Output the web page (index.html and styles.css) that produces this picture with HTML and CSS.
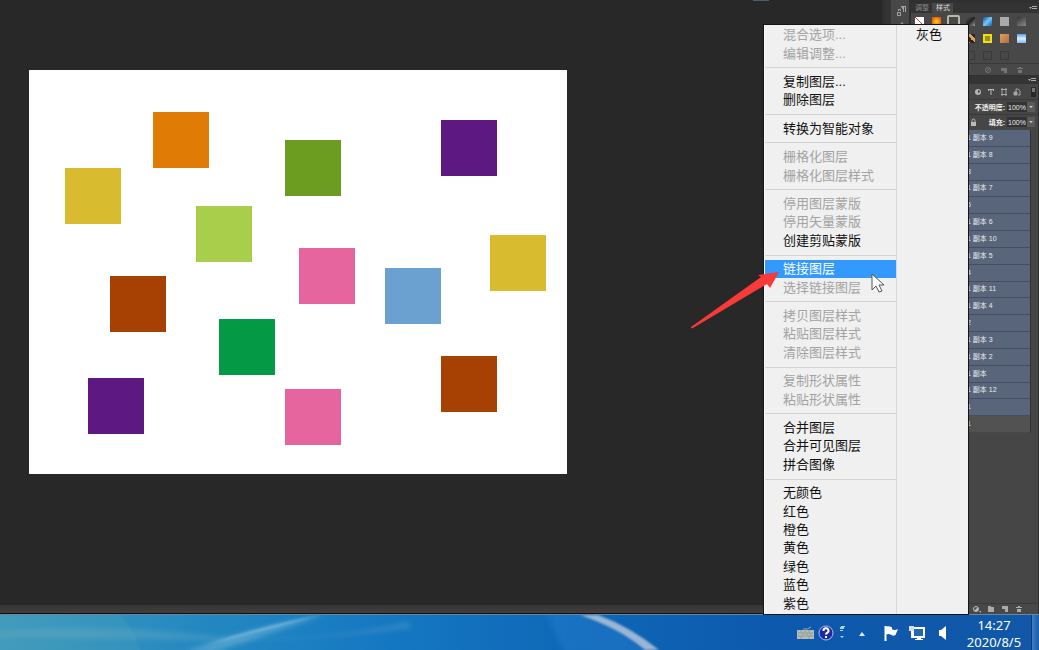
FILE: index.html
```html
<!DOCTYPE html>
<html lang="zh-CN">
<head>
<meta charset="utf-8">
<title>图层菜单</title>
<link rel="stylesheet" href="styles.css">
</head>
<body>
<main class="app">
  <section class="canvas-area">
    <svg class="document" viewBox="0 0 538 404" role="img" aria-label="画布">
      <rect width="538" height="404" fill="#fff"/>
      <rect x="124" y="42" width="56" height="56" fill="#e07b06"/>
      <rect x="256" y="70" width="56" height="56" fill="#6c9d20"/>
      <rect x="412" y="50" width="56" height="56" fill="#5d1881"/>
      <rect x="36" y="98" width="56" height="56" fill="#d8bb2e"/>
      <rect x="167" y="136" width="56" height="56" fill="#a8ce4b"/>
      <rect x="270" y="178" width="56" height="56" fill="#e7659f"/>
      <rect x="461" y="165" width="56" height="56" fill="#d8bb2e"/>
      <rect x="356" y="198" width="56" height="56" fill="#6ba1d1"/>
      <rect x="81" y="206" width="56" height="56" fill="#a64103"/>
      <rect x="190" y="249" width="56" height="56" fill="#049a45"/>
      <rect x="412" y="286" width="56" height="56" fill="#a64103"/>
      <rect x="59" y="308" width="56" height="56" fill="#5d1881"/>
      <rect x="256" y="319" width="56" height="56" fill="#e7659f"/>
    </svg>
    <div class="status-strip"></div>
    <div class="top-notch"></div>
  </section>

  <aside class="icon-strip">
    <svg width="12" height="14" viewBox="0 0 12 14" fill="none" stroke="#a5a5a5"><path d="M4 2.500h5M6.500 2v6M8.500 2v6"/><path d="M6 2a2 2 0 0 0 0 3z" fill="#a5a5a5"/><path d="M.5 8.500h3v3h-3zM1.500 7V5.500h2V7"/></svg>
    <svg width="12" height="10" viewBox="0 0 12 10"><path d="M2 4l3-4 3 4z" fill="#999"/></svg>
  </aside>

  <aside class="panels">
    <section class="styles-panel">
      <header class="tabs">
        <button class="tab">调整</button><button class="tab tab-on">样式</button>
        <svg class="menu-mark" width="8" height="6" viewBox="0 0 8 6"><path d="M0 2h3L1.500 4zM3 1h5v1H3zM3 3h5v1H3z" fill="#aaa"/></svg>
      </header>
      <div class="swatches">
        <i class="sw sw-none"></i><i class="sw sw-fire"></i><i class="sw sw-frame"></i><i class="sw sw-night"></i><i class="sw sw-blue"></i><i class="sw sw-gray"></i><i class="sw sw-steel"></i>
        <i class="sw"></i><i class="sw"></i><i class="sw"></i><i class="sw sw-camo"></i><i class="sw sw-yellow"></i><i class="sw sw-copper"></i><i class="sw sw-sky"></i>
        <i class="sw"></i><i class="sw"></i><i class="sw"></i><i class="sw sw-empty"></i><i class="sw sw-empty"></i><i class="sw sw-empty"></i>
      </div>
      <footer class="foot foot-dim">
        <svg width="8" height="8" viewBox="0 0 8 8" fill="none" stroke="#757575"><circle cx="4" cy="4" r="2.500"/><path d="M2 6l4-4"/></svg>
        <svg width="8" height="8" viewBox="0 0 8 8"><path d="M1 2h6v5H4V5H1z" fill="#757575"/></svg>
        <svg width="8" height="8" viewBox="0 0 8 8"><path d="M1 2h2V1h2v1h2v1H1zM2 4h4v3H2z" fill="#757575"/></svg>
      </footer>
    </section>

    <section class="layers-panel">
      <header class="layers-head">
        <svg class="menu-mark" width="8" height="6" viewBox="0 0 8 6"><path d="M0 2h3L1.500 4zM3 1h5v1H3zM3 3h5v1H3z" fill="#aaa"/></svg>
      </header>
      <div class="filters">
        <svg width="8" height="8" viewBox="0 0 8 8"><path d="M1 1h6v6H1z" fill="none" stroke="#bbb"/></svg>
        <svg width="8" height="8" viewBox="0 0 8 8"><circle cx="4" cy="4" r="3" fill="#b5b5b5"/><path d="M4 2a2 2 0 0 1 2 2l-2 1z" fill="#444"/></svg>
        <svg width="8" height="8" viewBox="0 0 8 8"><path d="M1 1h6v2H6V2H4.500v5h-1V2H2v1H1z" fill="#bbb"/></svg>
        <svg width="8" height="8" viewBox="0 0 8 8" fill="none" stroke="#a5a5a5"><path d="M2 0v8M6 0v8M1 1.500h6M1 6.500h6"/></svg>
        <svg width="8" height="8" viewBox="0 0 8 8" fill="none" stroke="#a5a5a5"><path d="M3 5V1h2l2 2v4H5"/><path d="M1 4h3v3H1z" fill="#a5a5a5"/></svg>
        <svg width="5" height="10" viewBox="0 0 5 10"><path d="M0 0h5v10H0z" fill="#292929"/><path d="M1 1h3v4H1z" fill="#777"/></svg>
      </div>
      <div class="setting"><label for="opacity">不透明度:</label><input id="opacity" value="100%"><button class="drop" aria-label="不透明度选项"></button></div>
      <div class="setting">
        <svg class="lock" width="7" height="8" viewBox="0 0 7 8"><path d="M2 4V2.500a1.500 1.500 0 0 1 3 0V4" fill="none" stroke="#bbb"/><path d="M1 4h5v4H1z" fill="#bbb"/></svg>
        <label for="fill">填充:</label><input id="fill" value="100%"><button class="drop" aria-label="填充选项"></button></div>
      <ul class="layers">
        <li>1 副本 9</li><li>1 副本 8</li><li>8</li><li>1 副本 7</li><li>5</li><li>1 副本 6</li><li>1 副本 10</li><li>1 副本 5</li><li>4</li><li>1 副本 11</li><li>1 副本 4</li><li>2</li><li>1 副本 3</li><li>1 副本 2</li><li>1 副本</li><li>1 副本 12</li><li>1</li><li class="plain">1</li>
      </ul>
      <footer class="foot foot-end">
        <svg width="9" height="8" viewBox="0 0 9 8"><circle cx="4" cy="4" r="2.500" fill="none" stroke="#bbb"/><path d="M2 6l4-4v4zM7 6h2v2z" fill="#bbb"/></svg>
        <svg width="8" height="8" viewBox="0 0 8 8"><path d="M1 1h3v1h3v5H1z" fill="#aaa"/></svg>
        <svg width="8" height="8" viewBox="0 0 8 8"><path d="M1 1h6v6H4V4H1z" fill="#aaa"/></svg>
        <svg width="8" height="8" viewBox="0 0 8 8"><path d="M1 2h2V1h2v1h2v1H1zM2 4h4v3H2z" fill="#aaa"/></svg>
      </footer>
    </section>
  </aside>
</main>

<footer class="taskbar">
  <svg class="glow" viewBox="0 0 1039 36" preserveAspectRatio="none" aria-hidden="true">
    <defs>
      <filter id="soft"><feGaussianBlur stdDeviation="1"/></filter>
      <filter id="softer" x="-20%" y="-50%" width="140%" height="200%"><feGaussianBlur stdDeviation="3"/></filter>
    </defs>
    <path d="M-10 18Q90 8 200 20T410 6V14Q300 28 200 26T-10 22z" fill="#9cc3c8" opacity=".2" filter="url(#softer)"/>
    <path d="M115 -6Q135 14 142 42H-10V-6z" fill="#62b0b5" opacity=".15" filter="url(#soft)"/>
    <path d="M185 38Q250 12 325 0Q280 16 215 38z" fill="#8cc4e2" opacity=".4" filter="url(#softer)"/>
    <path d="M205 31Q265 10 322 0Q265 16 205 31z" fill="#8cc4e2" opacity=".6" filter="url(#soft)"/>
    <path d="M545 -4H583Q620 12 655 40H565z" fill="#2e84d8" opacity=".35" filter="url(#softer)"/>
    <path d="M580 0H598Q630 12 659 36H645Q620 14 580 0z" fill="#a9bfd9" opacity=".9" filter="url(#soft)"/>
  </svg>
  <div class="tray">
    <svg width="17" height="14" viewBox="0 0 17 14"><path d="M6 3q5 1 8-2" fill="none" stroke="#9ba9a9"/><path d="M0 4h17v9H0z" fill="#b5bcb8"/><path d="M1 7h15M1 10h15M4 4v3M8 4v3M12 4v3M6 7v3M10 7v3M14 7v3M4 10v3M12 10v3" stroke="#919e9c"/></svg>
    <svg width="16" height="16" viewBox="0 0 16 16"><circle cx="8" cy="8" r="7" fill="#1f28a4" stroke="#b4bde8"/><path d="M5.500 6a2.500 2.500 0 1 1 3.500 2q-1 .5-1 1.500M8 11v2" fill="none" stroke="#fff" stroke-width="2"/></svg>
    <svg width="8" height="16" viewBox="0 0 8 16"><path d="M3 1h4v1H6v2H2V2h1zM2 5h3v1H2zM2 11h4l-2 2z" fill="#a5d9ee"/></svg>
    <svg class="up" width="8" height="6" viewBox="0 0 8 6"><path d="M1 5l3-4 3 4z" fill="#dcefff"/></svg>
    <svg class="flag" width="18" height="18" viewBox="0 0 18 18"><path d="M3.500 2v15" stroke="#fff" stroke-width="2"/><path d="M4 2.500q3-1 6 1v2q3 1 6-.5l-2.500 6q-2.500 1.500-5-.5-2-1-4.500 0z" fill="#fff"/></svg>
    <svg width="18" height="18" viewBox="0 0 18 18"><path d="M5 4h11v9H5z" fill="#2468a9" stroke="#fff" stroke-width="2"/><path d="M9 14h4v1h2v1H7v-1h2z" fill="#fff"/><path d="M1 2h5v5H1z" fill="#d9e0e4"/><path d="M3.500 7v7" fill="none" stroke="#fff"/></svg>
    <svg class="speaker" width="12" height="16" viewBox="0 0 12 16"><path d="M2 5h2l5-4v14l-5-4H2z" fill="#fff"/></svg>
  </div>
  <div class="clock"><time>14:27</time><time>2020/8/5</time></div>
  <div class="peek"></div>
</footer>

<nav class="context-menu">
  <div class="column">
    <button disabled>混合选项...</button><button disabled>编辑调整...</button><hr>
    <button>复制图层...</button><button>删除图层</button><hr>
    <button>转换为智能对象</button><hr>
    <button disabled>栅格化图层</button><button disabled>栅格化图层样式</button><hr>
    <button disabled>停用图层蒙版</button><button disabled>停用矢量蒙版</button><button>创建剪贴蒙版</button><hr>
    <button class="active">链接图层</button><button disabled>选择链接图层</button><hr>
    <button disabled>拷贝图层样式</button><button disabled>粘贴图层样式</button><button disabled>清除图层样式</button><hr>
    <button disabled>复制形状属性</button><button disabled>粘贴形状属性</button><hr>
    <button>合并图层</button><button>合并可见图层</button><button>拼合图像</button><hr>
    <button>无颜色</button><button>红色</button><button>橙色</button><button>黄色</button><button>绿色</button><button>蓝色</button><button>紫色</button>
  </div>
  <div class="column-side"><button>灰色</button></div>
  <svg class="arrow" width="90" height="60" viewBox="0 0 90 60" aria-hidden="true"><path d="M1 56L71 6 68 4 89 1 80 17 77 13 3 57Q1 58 1 56z" fill="#fa3a38"/></svg>
  <svg class="pointer" width="14" height="21" viewBox="0 0 14 21" aria-hidden="true"><path d="M1 1v16l4-4 3 6 3-1-3-6h5z" fill="#fff" stroke="#555"/></svg>
</nav>
</body>
</html>
```
FILE: styles.css
```css
* { box-sizing: border-box; }
body {
  margin: 0;
  height: 100vh;
  display: flex;
  flex-direction: column;
  position: relative;
  overflow: hidden;
  background: #282828;
  font-family: "Liberation Sans", "Noto Sans CJK SC", sans-serif;
}
button { border: 0; margin: 0; padding: 0; background: none; font: inherit; color: inherit; text-align: left; }
svg { display: block; flex: none; }

.app { flex: 1; min-height: 0; display: flex; }
.canvas-area {
  flex: 1;
  display: flex;
  flex-direction: column;
  justify-content: space-between;
  padding: 70px 0 0 29px;
  position: relative;
  border-right: 3px solid #303030;
}
.document { width: 538px; }
.status-strip { height: 9px; margin-left: -29px; background: linear-gradient(#353535, #423e3d); border-bottom: 1px solid #111; }
.top-notch { position: absolute; top: 0; right: 113px; width: 16px; height: 1px; background: #466078; }

.icon-strip {
  width: 26px;
  padding: 4px 0 0 6px;
  display: flex;
  flex-direction: column;
  gap: 4px;
  background: #484848;
  border-left: 6px solid #343434;
  border-right: 2px solid #303030;
}
.panels { width: 128px; display: flex; flex-direction: column; gap: 1px; background: #303030; color: #d8d8d8; font-size: 7px; }
.styles-panel { background: #484848; border-top: 3px solid #303030; }
.tabs { height: 10px; display: flex; align-items: center; background: #333; color: #888; line-height: 10px; }
.tab { width: 21px; padding-left: 4px; }
.tab-on { background: #484848; color: #ddd; }
.menu-mark { margin-left: auto; margin-right: 2px; }
.swatches {
  height: 50px;
  padding: 2px 0 0 2px;
  display: grid;
  grid-template-columns: repeat(7, 17px);
  grid-template-rows: repeat(3, 17px);
}
.sw { width: 9px; height: 9px; margin: 2px; }
.sw-none { background: linear-gradient(45deg, #fff 45%, #c33 45%, #c33 55%, #fff 55%); }
.sw-fire { background: radial-gradient(#ffd018, #e03c08); }
.sw-frame { width: 13px; height: 13px; margin: 0; border: 2px solid #b8b8a5; border-radius: 2px; background: #484848; }
.sw-night { background: linear-gradient(135deg, #555, #222 50%, #999); }
.sw-blue { background: linear-gradient(135deg, #154d91, #74c8fb 50%, #1860ac); }
.sw-gray { background: #aaa; }
.sw-steel { background: linear-gradient(150deg, #333, #888); }
.sw-camo { background: linear-gradient(45deg, #d9a35a 25%, #332218 25%, #332218 50%, #d9a35a 50%, #d9a35a 75%, #332218 75%); }
.sw-yellow { background: #9e8d16; border: 2px solid #f1df16; }
.sw-copper { background: linear-gradient(135deg, #dda064, #b56d37); }
.sw-sky { background: linear-gradient(#5b9fe5, #d8efff, #86baf0); }
.sw-empty { border: 1px solid #3a3a3a; }
.foot { height: 12px; display: flex; align-items: center; justify-content: flex-end; gap: 8px; padding-right: 15px; border-top: 1px solid #393939; }
.foot-end { height: 11px; gap: 6px; margin-top: auto; background: #484848; }

.layers-panel { flex: 1; min-height: 0; display: flex; flex-direction: column; background: #464646; border-right: 1px solid #303030; }
.layers-head { height: 8px; flex: none; display: flex; align-items: center; background: #343434; }
.filters { height: 15px; flex: none; display: flex; align-items: center; justify-content: flex-end; gap: 5px; padding-right: 2px; }
.filters svg:last-child { margin-left: 5px; }
.setting { height: 15px; flex: none; display: flex; align-items: center; justify-content: flex-end; padding-right: 3px; border-top: 1px solid #3a3a3a; }
.setting label { margin-right: 2px; color: #f2f2f2; font-weight: bold; }
.setting input { width: 20px; height: 10px; border: 0; padding: 0 1px; background: #333; color: #eee; font: 7px "Liberation Sans", sans-serif; }
.drop { width: 8px; height: 10px; background: #5a5a5a; display: grid; place-items: center; }
.drop::after { content: ""; border: 2px solid transparent; border-top-color: #ccc; border-bottom: 0; }
.lock { margin-right: 12px; }
.layers { list-style: none; margin: 1px 7px 0 0; padding: 0; height: 303px; display: grid; grid-auto-rows: 1fr; border-right: 1px solid #303030; }
.layers li {
  padding-left: 56px;
  display: flex;
  align-items: center;
  background: #59657a;
  border-bottom: 1px solid #444e60;
  color: #e8edf5;
  line-height: 10px;
  white-space: pre;
}
.layers .plain { background: #525252; border-color: #484848; }

.taskbar {
  height: 36px;
  flex: none;
  position: relative;
  display: flex;
  justify-content: flex-end;
  border-top: 1px solid #6688a0;
  background: linear-gradient(90deg, #3d98bd, #2388c1 20%, #1477c2 38%, #0e65b5 58%, #0d59ad 75%, #1257a7);
  color: #fff;
}
.glow { position: absolute; inset: 0; width: 100%; height: 100%; }
.tray { position: relative; display: flex; align-items: center; gap: 4px; margin-right: 14px; }
.tray .up { margin: 2px 12px 0 8px; }
.flag { margin-right: 4px; }
.speaker { margin-left: 7px; }
.clock { position: relative; width: 62px; display: flex; flex-direction: column; align-items: center; padding-top: 2px; font: 13px/17px "Noto Sans", sans-serif; }
.peek { width: 8px; margin-left: 6px; position: relative; border-left: 1px solid #0b3770; background: linear-gradient(90deg, #3b7fc4, #1a5ba8); }

.context-menu {
  position: absolute;
  top: 25px;
  right: 71px;
  bottom: 36px;
  width: 204px;
  display: flex;
  background: #f0f0f0;
  border-left: 1px solid #fafafa;
  box-shadow: 0 0 0 1px #151515;
  color: #111;
  font: 13px/18px "Liberation Sans", "Noto Sans CJK SC", sans-serif;
}
.column { width: 132px; padding: 1px 0; display: flex; flex-direction: column; border-right: 1px solid #d8d8d8; }
.column button { flex: 37 1 0; min-height: 0; padding-left: 18px; white-space: nowrap; }
.column button:disabled { color: #a3a3a3; }
.column .active { background: #3399ff; color: #fff; }
.column hr { flex: 20 1 0; width: 100%; margin: 0; border: 0; background: linear-gradient(#d3d3d3, #d3d3d3) center / 100% 1px no-repeat; }
.column-side { flex: 1; padding: 1px 0 0 19px; }
.arrow { position: absolute; left: -75px; top: 246px; }
.pointer { position: absolute; left: 106px; top: 248px; }
```
